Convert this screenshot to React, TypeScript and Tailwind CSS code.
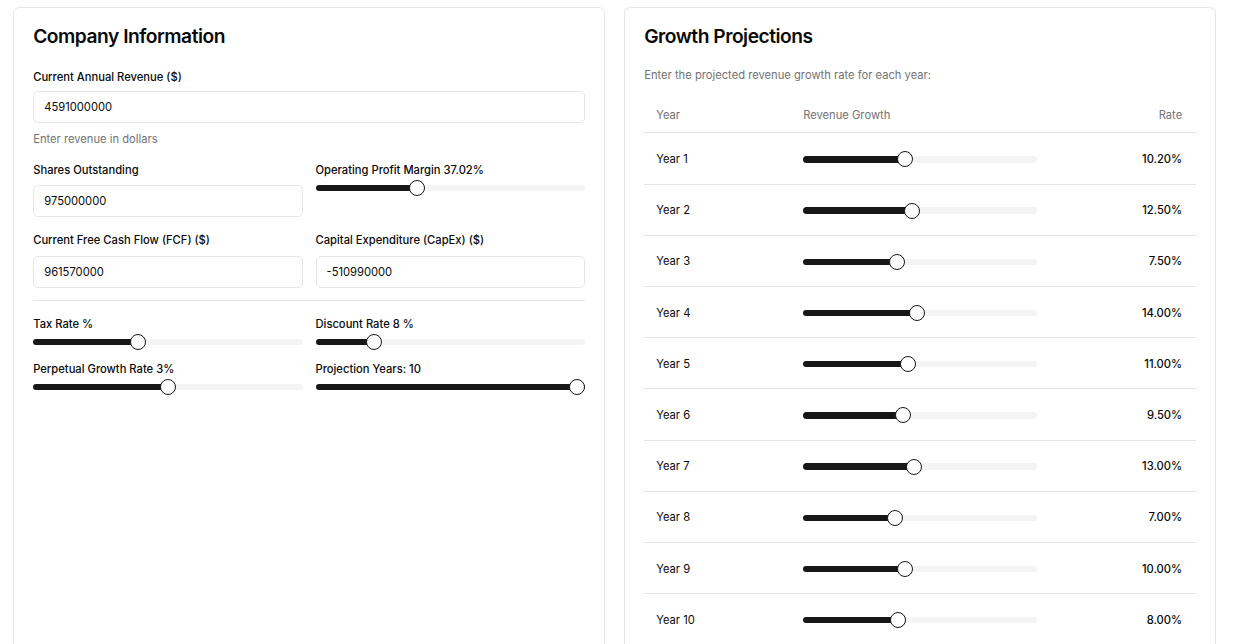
import React from 'react'

const font = { fontFamily: 'Inter, "Liberation Sans", sans-serif' }

function Slider({ pct }: { pct: number }) {
    // thumb stays inside the track, like radix
    return (
        <div className="relative h-[16px] w-full flex items-center">
            <div className="relative h-[6.4px] w-full rounded-full bg-[#f4f4f5] overflow-hidden">
                <div className="absolute left-0 top-0 h-full bg-[#171717]" style={{ width: `${pct * 100}%` }} />
            </div>
            <div
                className="absolute top-0 h-[16px] w-[16px] rounded-full border border-[#171717] bg-white"
                style={{ left: `calc(${pct * 100}% - ${pct * 16}px)` }}
            />
        </div>
    )
}

function Label({ children }: { children: React.ReactNode }) {
    return <div className="text-[11.2px] leading-[16px] font-medium text-[#0a0a0a]">{children}</div>
}

function Input({ value, className = '' }: { value: string; className?: string }) {
    return (
        <div className={`h-[32px] w-full rounded-[4.8px] border border-[#e5e5e5] bg-white px-[10px] flex items-center text-[11.2px] text-[#0a0a0a] ${className}`}>
            {value}
        </div>
    )
}

const years = [
    { year: 1, rate: 10.2 },
    { year: 2, rate: 12.5 },
    { year: 3, rate: 7.5 },
    { year: 4, rate: 14 },
    { year: 5, rate: 11 },
    { year: 6, rate: 9.5 },
    { year: 7, rate: 13 },
    { year: 8, rate: 7 },
    { year: 9, rate: 10 },
    { year: 10, rate: 8 },
]

export default function App() {
    return (
        <div className="min-h-screen bg-white pl-[13px] pr-[19px] pt-[7px] pb-[20px]" style={font}>
            <div className="grid grid-cols-[592px_592px] gap-[19px] items-stretch">
                {/* Company Information */}
                <div className="rounded-[6.4px] border border-[#e5e5e5] bg-white p-[19.2px]">
                    <h2 className="text-[19.2px] font-semibold leading-none tracking-tight text-[#0a0a0a]">Company Information</h2>

                    <div className="mt-[22.6px]">
                        <Label>Current Annual Revenue ($)</Label>
                        <Input value="4591000000" className="mt-[6.4px]" />
                        <div className="mt-[7.6px] text-[11.2px] leading-[16px] text-[#737373]">Enter revenue in dollars</div>
                    </div>

                    <div className="mt-[15px] grid grid-cols-2 gap-x-[13px]">
                        <div>
                            <Label>Shares Outstanding</Label>
                            <Input value="975000000" className="mt-[7px]" />
                        </div>
                        <div>
                            <Label>Operating Profit Margin 37.02%</Label>
                            <div className="mt-[2px]">
                                <Slider pct={0.3702} />
                            </div>
                        </div>
                    </div>

                    <div className="mt-[15px] grid grid-cols-2 gap-x-[13px]">
                        <div>
                            <Label>Current Free Cash Flow (FCF) ($)</Label>
                            <Input value="961570000" className="mt-[8px]" />
                        </div>
                        <div>
                            <Label>Capital Expenditure (CapEx) ($)</Label>
                            <Input value="-510990000" className="mt-[8px]" />
                        </div>
                    </div>

                    <div className="mt-[12px] h-px bg-[#e5e5e5]" />

                    <div className="mt-[15px] grid grid-cols-2 gap-x-[13px]">
                        <div>
                            <Label>Tax Rate %</Label>
                            <div className="mt-[2px]">
                                <Slider pct={0.384} />
                            </div>
                        </div>
                        <div>
                            <Label>Discount Rate 8 %</Label>
                            <div className="mt-[2px]">
                                <Slider pct={0.2} />
                            </div>
                        </div>
                    </div>

                    <div className="mt-[11px] grid grid-cols-2 gap-x-[13px]">
                        <div>
                            <Label>Perpetual Growth Rate 3%</Label>
                            <div className="mt-[2px]">
                                <Slider pct={0.5} />
                            </div>
                        </div>
                        <div>
                            <Label>Projection Years: 10</Label>
                            <div className="mt-[2px]">
                                <Slider pct={1} />
                            </div>
                        </div>
                    </div>
                </div>

                {/* Growth Projections */}
                <div className="rounded-[6.4px] border border-[#e5e5e5] bg-white p-[19.2px]">
                    <h2 className="text-[19.2px] font-semibold leading-none tracking-tight text-[#0a0a0a]">Growth Projections</h2>
                    <p className="mt-[20.6px] text-[11.2px] leading-[16px] text-[#737373]">
                        Enter the projected revenue growth rate for each year:
                    </p>

                    <div className="mt-[12px] text-[11.2px]">
                        <div className="grid grid-cols-[147px_258px_145px] h-[38.4px] items-center border-b border-[#e5e5e5] text-[#737373] pt-[3px]">
                            <div className="px-[12px]">Year</div>
                            <div className="px-[12px]">Revenue Growth</div>
                            <div className="px-[12px] text-right">Rate</div>
                        </div>
                        {years.map((y) => (
                            <div key={y.year} className="grid grid-cols-[147px_258px_145px] h-[51.2px] items-center border-b border-[#e5e5e5] pt-[2px]">
                                <div className="px-[12px] text-[#0a0a0a]">Year {y.year}</div>
                                <div className="px-[12px]">
                                    <Slider pct={(y.rate + 20) / 70} />
                                </div>
                                <div className="px-[12px] text-right font-medium text-[#0a0a0a]">{y.rate.toFixed(2)}%</div>
                            </div>
                        ))}
                    </div>
                </div>
            </div>
        </div>
    )
}
